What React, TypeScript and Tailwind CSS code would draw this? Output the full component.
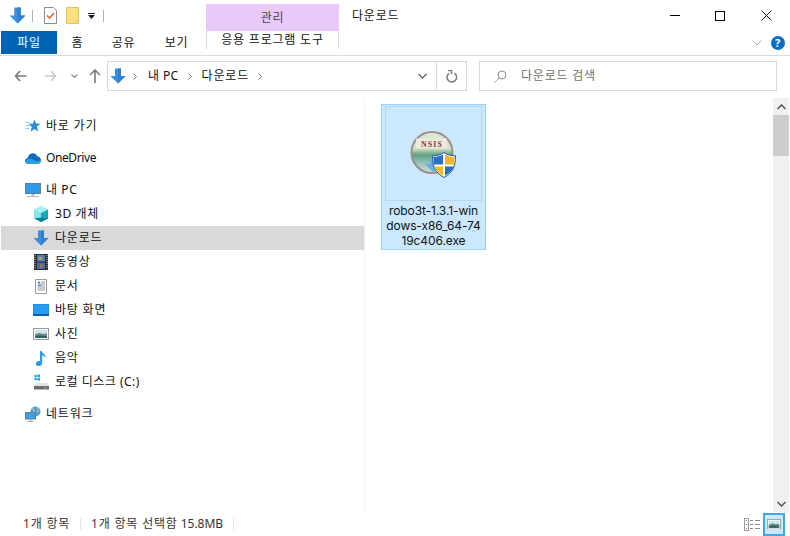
import type { ReactNode } from 'react'

const Arrow = ({ size = 16 }: { size?: number }) => (
  <svg width={size} height={size} viewBox="0 0 16 16">
    <path d="M5 0.500h6v7.500h4.500L8 15.500 0.500 8H5z" fill="#3a8fe0" />
    <path d="M8 0.500h3v7.500h4.500L8 15.500z" fill="#2f7fd0" />
  </svg>
)

const Star = () => (
  <svg width="16" height="14" viewBox="0 0 16 14">
    <path d="M9.500 0.500l1.500 4 4.500.3-3.500 2.800 1.200 4.900-3.700-2.500-4 2.700 1.300-5L3.500 4.800h4.300z" fill="#2b8fdc" />
    <path d="M0.500 3.500h4M1 6.500h3M0.500 9.500h3.500" stroke="#8cc4ee" strokeWidth="1" />
  </svg>
)

const Cloud = () => (
  <svg width="16" height="11" viewBox="0 0 16 11">
    <path d="M3.500 11C1.500 11 0 9.600 0 8c0-1.600 1.200-2.700 2.500-2.800C3 2.300 5.500.3 8 .3c2 0 3.600 1.200 4.200 3 2 .1 3.800 1.800 3.800 3.800 0 2-1.500 3.900-3.400 3.900z" fill="#0f6cbd" />
    <path d="M3.500 11C1.500 11 0 9.600 0 8c2.500-2 5.500-3 8-1.500 2 1.200 4.500 2.500 8 .6 0 2-1.500 3.900-3.400 3.900z" fill="#2b9fe6" />
  </svg>
)

const Monitor = () => (
  <svg width="16" height="14" viewBox="0 0 16 14">
    <rect x="0.500" y="0.500" width="15" height="10" fill="#2f9be8" stroke="#5f7e96" />
    <path d="M6.500 11h3v1.500h-3z" fill="#9fb3c0" />
    <path d="M2 13.500h12" stroke="#a8b8c4" />
  </svg>
)

const Cube = () => (
  <svg width="16" height="16" viewBox="0 0 16 16">
    <path d="M8 0l7 3.500v9L8 16l-7-3.500v-9z" fill="#7fe6ea" />
    <path d="M8 7l7-3.500v9L8 16z" fill="#1ba3b8" />
    <path d="M8 0l7 3.500L8 7 1 3.500z" fill="#a5f0f0" />
    <path d="M8 11.500l7 1L8 16l-7-3.500z" fill="#0b7f96" />
  </svg>
)

const Film = () => (
  <svg width="14" height="16" viewBox="0 0 14 16">
    <rect width="14" height="16" fill="#2d2d2d" />
    <path d="M1 1v14M13 1v14" stroke="#c9c9c9" strokeWidth="1" strokeDasharray="1 1" />
    <rect x="3" y="1" width="8" height="6.500" fill="#4d7fb8" />
    <rect x="3" y="8.500" width="8" height="6.500" fill="#3d6fb0" />
    <rect x="5" y="3" width="3" height="3" fill="#c9a040" />
    <rect x="6" y="10.500" width="3" height="3" fill="#c96a40" />
  </svg>
)

const Doc = () => (
  <svg width="12" height="15" viewBox="0 0 12 15">
    <path d="M.5.5h11v14H.5z" fill="#fff" stroke="#9a9a9a" />
    <path d="M6 3h4M2.500 5h7.500M2.500 7h7.500M2.500 9h7.500M2.500 11h7.500" stroke="#8a9aa8" />
    <path d="M3 2.500h2v2H3z" fill="#3d8fd8" />
    <path d="M3 6.500h3" stroke="#3d8fd8" />
  </svg>
)

const Desktop = () => (
  <svg width="16" height="12" viewBox="0 0 16 12">
    <rect width="16" height="11" fill="#1e8ee6" />
    <rect x="0" y="10" width="16" height="2" fill="#0b62ad" />
    <rect x="1" y="1" width="14" height="8.500" fill="#2a9df0" />
  </svg>
)

const Picture = ({ width = 16 }: { width?: number }) => (
  <svg width={width} height={width * 0.75} viewBox="0 0 16 12">
    <rect x="0.500" y="0.500" width="15" height="11" fill="#fff" stroke="#9a9a9a" />
    <rect x="2" y="2" width="12" height="8" fill="#cde3ef" />
    <path d="M2 6.500l4-1.500 4 1 4-.500V10H2z" fill="#5e8a78" />
    <path d="M2 8.500l5-1 7 1V10H2z" fill="#2e5f60" />
  </svg>
)

const Note = () => (
  <svg width="12" height="16" viewBox="0 0 12 16">
    <path d="M5 1h1.500c.5 2.500 4.500 3 4 7-.8-1.500-2-2.200-3.300-2.500V13c0 1.800-1.500 3-3.400 3C2 16 .8 15 .8 13.700c0-1.500 1.500-2.600 3.200-2.600.4 0 .7 0 1 .2z" fill="#2d9be8" />
  </svg>
)

const Drive = () => (
  <svg width="15" height="16" viewBox="0 0 15 16">
    <path d="M.5 1h2.300v2.200H.5zM3.500.6h2.500v2.600H3.500zM.5 4h2.300v2.200H.5zM3.500 4h2.500v2.400H3.500z" fill="#1aa3e8" />
    <path d="M1.500 9h12l1.500 3H0z" fill="#e4e4e4" />
    <rect y="12" width="15" height="3.500" fill="#6e6e6e" />
    <rect x="10.500" y="13" width="2" height="1.500" fill="#3ee03e" />
  </svg>
)

const Network = () => (
  <svg width="16" height="16" viewBox="0 0 16 16">
    <circle cx="10.500" cy="5.500" r="5" fill="#5a9fc8" />
    <path d="M7 2.500c2 .5 2.500 2 1.500 3.500M12 1c1 1.500 2 3 .5 5" stroke="#a9d4dc" fill="none" />
    <rect x="0.500" y="6.500" width="10" height="6.500" fill="#3fa0e8" stroke="#5f7e96" />
    <path d="M4 13.500h3v1H4z" fill="#9fb0bc" />
    <path d="M2.500 15.500h6" stroke="#9fb0bc" />
  </svg>
)

const Installer = () => (
  <svg width="48" height="48" viewBox="0 0 48 48">
    <defs>
      <linearGradient id="globe" x1="0" y1="0" x2="0" y2="1">
        <stop offset="0" stopColor="#dfe9d6" />
        <stop offset="0.400" stopColor="#d5e2c8" />
        <stop offset="0.560" stopColor="#5f9f80" />
        <stop offset="0.720" stopColor="#8dbcb0" />
        <stop offset="1" stopColor="#d6e0e6" />
      </linearGradient>
    </defs>
    <circle cx="22" cy="22.500" r="20.500" fill="url(#globe)" stroke="#9a8f86" strokeWidth="2" />
    <path d="M6 8.500h31v10H6z" fill="#efe9de" opacity="0.900" />
    <text x="22" y="16.500" textAnchor="middle" fontSize="8" fontWeight="700" letterSpacing="1" fontFamily="Liberation Serif, serif" fill="#8a3a40">NSIS</text>
    <path d="M20 28h7v6h5l-8.500 8.500L15 34h5z" fill="#6aaee0" />
    <path d="M34 22.500c2.800 2.200 6.500 3.200 11.500 3.300 0 10.500-2.400 16.700-11.500 21.700-9.100-5-11.500-11.200-11.500-21.700 5-.1 8.700-1.100 11.500-3.300z" fill="#fff" stroke="#1a5fa0" />
    <path d="M33 24.700v9.800H23.700c-.2-2.300-.3-4.700-.3-7.700 3.500-.1 7-.8 9.600-2.100z" fill="#2a6fc0" />
    <path d="M35 24.700c2.600 1.300 6.100 2 9.600 2.100 0 3-.1 5.400-.3 7.700H35z" fill="#f4b72e" />
    <path d="M33 36.500v9.300c-4.600-2.700-7.500-5.500-8.800-9.300z" fill="#f4b72e" />
    <path d="M35 36.500h8.800c-1.300 3.800-4.200 6.600-8.800 9.300z" fill="#2a6fc0" />
  </svg>
)

const NavItem = ({ icon, label, indent, active, spacing = 'tracking-[0.8px]' }: { icon: ReactNode; label: string; indent?: boolean; active?: boolean; spacing?: string }) => (
  <div className={`flex h-6 items-center ${active ? 'bg-[#d9d9d9]' : ''} ${indent ? 'pl-[32px]' : 'pl-[24px]'}`}>
    <span className="flex w-4 shrink-0 items-center justify-center">{icon}</span>
    <span className={`whitespace-nowrap ${spacing} ${indent ? 'ml-[6px]' : 'ml-[5px]'}`}>{label}</span>
  </div>
)

const Crumb = () => (
  <svg width="4" height="7" viewBox="0 0 4 7"><path d="M.5.500l3 3-3 3" stroke="#7a7a7a" fill="none" /></svg>
)

export default function App() {
  return (
    <div
      className="flex h-[536px] w-[790px] flex-col overflow-hidden bg-white text-[12px] text-[#111]"
      style={{ fontFamily: '"Noto Sans", "Noto Sans CJK KR", sans-serif' }}
    >
      {/* title bar */}
      <div className="flex h-[31px] shrink-0">
        <div className="flex w-[206px] items-center pl-[9px]">
          <Arrow size={17} />
          <span className="ml-[6px] h-[12px] w-px bg-[#b0b0b0]" />
          <svg className="ml-[11px]" width="13" height="17" viewBox="0 0 13 17">
            <path d="M.5.5h9l3 3v13H.5z" fill="#fff" stroke="#8a8a8a" />
            <path d="M3 8.500l2.500 2.500L10 6" stroke="#e0562a" strokeWidth="1.300" fill="none" />
          </svg>
          <svg className="ml-[9px]" width="13" height="17" viewBox="0 0 13 17">
            <path d="M.5.5h12v16H.5z" fill="#fde07e" stroke="#e3c25c" />
            <path d="M10 13.500v3" stroke="#e3c25c" />
          </svg>
          <svg className="ml-[9px]" width="7" height="6" viewBox="0 0 7 6">
            <path d="M0 0h7v1H0zM0 2h7L3.500 6z" fill="#222" />
          </svg>
          <span className="ml-[8px] h-[12px] w-px bg-[#b0b0b0]" />
        </div>
        <div className="mt-[4px] flex h-[27px] w-[133px] items-center justify-center bg-[#e9c9fc] tracking-[0.8px] text-[#444]">관리</div>
        <div className="flex flex-1 items-center pl-[13px] tracking-[0.8px]">다운로드</div>
        <div className="mr-px flex">
          <div className="flex w-[45px] items-center justify-center">
            <span className="h-px w-[10px] bg-black" />
          </div>
          <div className="flex w-[46px] items-center justify-center">
            <span className="h-[10px] w-[10px] border border-black" />
          </div>
          <div className="flex w-[46px] items-center justify-center">
            <svg width="11" height="11" viewBox="0 0 11 11">
              <path d="M.5.5l10 10M10.500.5l-10 10" stroke="#111" />
            </svg>
          </div>
        </div>
      </div>

      {/* ribbon tabs */}
      <div className="flex h-[25px] shrink-0 border-b border-[#dadada] pl-px tracking-[0.8px]">
        <div className="flex h-[23px] w-[56px] items-center justify-center bg-[#0063b1] text-white">파일</div>
        <div className="flex h-[23px] w-[41px] items-center justify-center">홈</div>
        <div className="ml-[5px] flex h-[23px] w-[41px] items-center justify-center">공유</div>
        <div className="ml-[12px] flex h-[23px] w-[41px] items-center justify-center">보기</div>
        <div className="ml-[9px] flex h-[18px] w-[133px] items-center justify-center border-x border-[#dadada] pb-[1px]">응용 프로그램 도구</div>
        <div className="flex flex-1 items-center justify-end pb-px pr-[5px]">
          <svg width="10" height="6" viewBox="0 0 10 6" className="mr-[9px]">
            <path d="M.5.500L5 5 9.500.500" stroke="#b0b0b0" fill="none" />
          </svg>
          <span className="flex h-[14px] w-[14px] items-center justify-center rounded-full bg-[#0b6fc4] text-[11px] font-bold leading-none text-white">?</span>
        </div>
      </div>

      {/* address row */}
      <div className="flex h-[42px] shrink-0 items-center pb-[7px] pl-[14px] pt-[5px]">
        <svg width="13" height="12" viewBox="0 0 13 12">
          <path d="M6 1L1.500 6 6 11M1.500 6H12.500" stroke="#7a7a7a" strokeWidth="1.600" fill="none" />
        </svg>
        <svg className="ml-[17px]" width="13" height="12" viewBox="0 0 13 12">
          <path d="M7 1l4.500 5L7 11M11.500 6H.5" stroke="#c9c9c9" strokeWidth="1.600" fill="none" />
        </svg>
        <svg className="ml-[14px]" width="7" height="5" viewBox="0 0 7 5">
          <path d="M.5.500l3 3 3-3" stroke="#8a8a8a" strokeWidth="1.200" fill="none" />
        </svg>
        <svg className="ml-[11px]" width="12" height="14" viewBox="0 0 12 14">
          <path d="M1 6l5-5 5 5M6 1v13" stroke="#7a7a7a" strokeWidth="1.600" fill="none" />
        </svg>
        <div className="ml-[6px] flex h-[30px] w-[360px] items-center border border-[#d9d9d9]">
          <span className="ml-[2px]"><Arrow /></span>
          <span className="ml-[7px] flex"><Crumb /></span>
          <span className="ml-[11px] tracking-[0.4px]">내 PC</span>
          <span className="ml-[9px] flex"><Crumb /></span>
          <span className="ml-[10px] tracking-[0.8px]">다운로드</span>
          <span className="ml-[9px] flex"><Crumb /></span>
          <span className="flex-1" />
          <svg className="mr-[9px]" width="9" height="6" viewBox="0 0 9 6"><path d="M.5 1l4 4 4-4" stroke="#666" strokeWidth="1.400" fill="none" /></svg>
          <span className="flex h-full w-[30px] items-center justify-center border-l border-[#d9d9d9]">
            <svg width="12" height="13" viewBox="0 0 12 13">
              <path d="M8.500 3.200A4.800 4.800 0 1 1 3 3.300" stroke="#7a7a7a" strokeWidth="1.500" fill="none" />
              <path d="M2 .500h3.500V4" stroke="#7a7a7a" strokeWidth="1.500" fill="none" />
            </svg>
          </span>
        </div>
        <div className="ml-[12px] flex h-[30px] w-[298px] items-center border border-[#d9d9d9] text-[#6d6d6d]">
          <svg className="ml-[14px]" width="13" height="13" viewBox="0 0 13 13">
            <circle cx="8" cy="5" r="4" stroke="#8a8a8a" fill="none" />
            <path d="M5 8L.5 12.500" stroke="#c49a7a" />
          </svg>
          <span className="ml-[14px] tracking-[0.8px]">다운로드 검색</span>
        </div>
      </div>

      {/* main */}
      <div className="flex min-h-0 flex-1">
        <div className="flex w-[365px] shrink-0 flex-col border-r border-[#f2f2f2] pl-px pt-[16px]">
          <NavItem icon={<Star />} label="바로 가기" />
          <div className="h-[8px]" />
          <NavItem icon={<Cloud />} label="OneDrive" spacing="tracking-[-0.4px]" />
          <div className="h-[8px]" />
          <NavItem icon={<Monitor />} label="내 PC" spacing="tracking-[0.6px]" />
          <NavItem indent icon={<Cube />} label="3D 개체" spacing="tracking-[0.6px]" />
          <NavItem indent active icon={<Arrow />} label="다운로드" />
          <NavItem indent icon={<Film />} label="동영상" />
          <NavItem indent icon={<Doc />} label="문서" />
          <NavItem indent icon={<Desktop />} label="바탕 화면" />
          <NavItem indent icon={<Picture />} label="사진" />
          <NavItem indent icon={<Note />} label="음악" />
          <NavItem indent icon={<Drive />} label="로컬 디스크 (C:)" spacing="tracking-[0.5px]" />
          <div className="h-[8px]" />
          <NavItem icon={<Network />} label="네트워크" />
        </div>

        <div className="flex-1 pl-[16px] pt-[6px]">
          <div className="flex h-[146px] w-[105px] flex-col items-center border border-[#99d1ff] bg-[#cce8ff] pt-px">
            <div className="flex h-[95px] w-[97px] shrink-0 items-center justify-center border border-[#b9d3e8]">
              <Installer />
            </div>
            <div className="mt-[2px] whitespace-nowrap text-center font-['Inter'] leading-[15px] tracking-[-0.1px]">
              robo3t-1.3.1-win<br />dows-x86_64-74<br />19c406.exe
            </div>
          </div>
        </div>

        <div className="mr-px flex w-[16px] shrink-0 flex-col bg-[#f0f0f0]">
          <div className="flex h-[17px] items-center justify-center">
            <svg width="9" height="6" viewBox="0 0 9 6"><path d="M.5 5l4-4 4 4" stroke="#555" strokeWidth="1.500" fill="none" /></svg>
          </div>
          <div className="h-[41px] bg-[#cdcdcd]" />
          <div className="flex-1" />
          <div className="flex h-[17px] items-center justify-center">
            <svg width="9" height="6" viewBox="0 0 9 6"><path d="M.5 1l4 4 4-4" stroke="#555" strokeWidth="1.500" fill="none" /></svg>
          </div>
        </div>
      </div>

      {/* status bar */}
      <div className="flex h-[24px] shrink-0 items-center pl-[23px] text-[#333]">
        <span className="pb-[1px] tracking-[0.8px]">1개 항목</span>
        <span className="ml-[10px] h-[12px] w-px bg-[#e6e6e6]" />
        <span className="ml-[10px] pb-[1px] tracking-[0.8px]">1개 항목 선택함</span>
        <span className="ml-[3px] pb-[1px]">15.8MB</span>
        <span className="ml-[10px] h-[12px] w-px bg-[#e6e6e6]" />
        <span className="flex-1" />
        <svg width="16" height="13" viewBox="0 0 16 13" className="mr-[3px]">
          <rect x="0.500" y="0.500" width="4" height="12" fill="#fff" stroke="#9a9a9a" />
          <path d="M2 2.500h1M2 6.500h1" stroke="#3d8fd8" />
          <path d="M2 10.500h1" stroke="#d04040" />
          <path d="M6 2.500h3M11 2.500h5M6 6.500h3M11 6.500h5M6 10.500h3M11 10.500h5" stroke="#8a8a8a" />
        </svg>
        <span className="mr-[5px] flex h-[23px] w-[22px] items-center justify-center border-2 border-[#3fa9e0] bg-[#cce8ff]">
          <Picture width={14} />
        </span>
      </div>
    </div>
  )
}
